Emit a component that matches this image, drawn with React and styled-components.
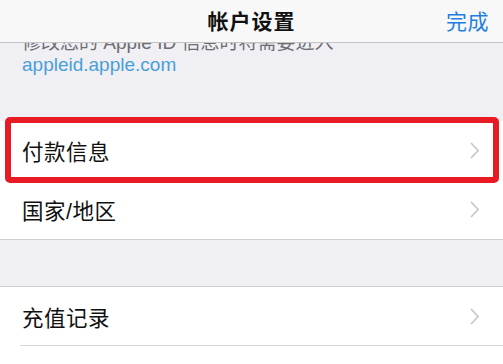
import React from "react";
import styled, { createGlobalStyle } from "styled-components";

const GlobalStyle = createGlobalStyle`
    html, body {
        margin: 0;
        padding: 0;
        background: #ffffff;
        overflow: hidden;
    }
    body {
        font-family: "Liberation Sans", "Noto Sans CJK SC", sans-serif;
        -webkit-font-smoothing: antialiased;
    }
`;

const Screen = styled.div`
    width: 503px;
    height: 364px;
    overflow: hidden;
    background: #efeff4;
    display: flex;
    flex-direction: column;
`;

const NavBar = styled.header`
    position: relative;
    z-index: 2;
    flex: none;
    height: 43px;
    box-sizing: border-box;
    display: grid;
    grid-template-columns: 1fr auto 1fr;
    align-items: center;
    padding: 0 14px 2px;
    background: #f8f8f8;
    border-bottom: 1px solid #c4c4c8;
`;

const NavTitle = styled.h1`
    grid-column: 2;
    margin: 0;
    font-size: 21px;
    font-weight: 600;
    color: #111;
    letter-spacing: 1px;
`;

const NavAction = styled.button`
    grid-column: 3;
    justify-self: end;
    border: none;
    background: none;
    padding: 0;
    font-family: inherit;
    font-size: 21px;
    color: #1f7fe2;
    letter-spacing: 0.5px;
`;

const SectionFooter = styled.div`
    flex: none;
    height: 78px;
    overflow: hidden;
    padding: 0 22px;
`;

const FooterText = styled.p`
    margin: -11px 0 0;
    font-size: 19px;
    line-height: 22px;
    color: #6d6d72;
    white-space: nowrap;
`;

const FooterLink = styled.a`
    display: block;
    color: #4aa0d6;
    text-decoration: none;
`;

const Group = styled.section`
    flex: none;
    background: #ffffff;
    border-top: ${props => props.top ? "1px solid #cfcfd3" : "none"};
    border-bottom: ${props => props.bottom ? "1px solid #cfcfd3" : "none"};
    margin-top: ${props => props.gap || 0}px;
`;

const Row = styled.div`
    position: relative;
    height: 59px;
    display: flex;
    align-items: center;
    justify-content: space-between;
    padding: 0 23px 0 22px;
    z-index: ${props => props.highlight ? 1 : 0};

    &::before {
        content: "";
        display: ${props => props.divider ? "block" : "none"};
        position: absolute;
        left: 20px;
        right: 0;
        bottom: 0;
        height: 1px;
        background: #d6d6da;
    }

    &::after {
        content: "";
        display: ${props => props.highlight ? "block" : "none"};
        position: absolute;
        top: -4px;
        bottom: -3px;
        left: 5px;
        right: 4px;
        border: 6px solid #e81a24;
        border-radius: 5px;
        box-sizing: border-box;
    }
`;

const RowLabel = styled.span`
    font-size: 21.5px;
    color: #111;
    letter-spacing: 0.5px;
`;

const Filler = styled.div`
    flex: 1;
    background: #ffffff;
`;

const Chevron = () => (
    <svg width="10" height="17" viewBox="0 0 10 17" fill="none">
        <polyline points="1.5,1.5 8.2,8.5 1.5,15.5" stroke="#c7c7cc" strokeWidth="1.8"
            strokeLinecap="round" strokeLinejoin="round" />
    </svg>
);

export default function App() {
    return (
        <Screen>
            <GlobalStyle />
            <NavBar>
                <NavTitle>帐户设置</NavTitle>
                <NavAction>完成</NavAction>
            </NavBar>
            <SectionFooter>
                <FooterText>
                    修改您的 Apple ID 信息时将需要进入
                    <FooterLink href="#">appleid.apple.com</FooterLink>
                </FooterText>
            </SectionFooter>
            <Group bottom>
                <Row highlight>
                    <RowLabel>付款信息</RowLabel>
                    <Chevron />
                </Row>
                <Row>
                    <RowLabel>国家/地区</RowLabel>
                    <Chevron />
                </Row>
            </Group>
            <Group top gap={46}>
                <Row divider>
                    <RowLabel>充值记录</RowLabel>
                    <Chevron />
                </Row>
            </Group>
            <Filler />
        </Screen>
    );
}
